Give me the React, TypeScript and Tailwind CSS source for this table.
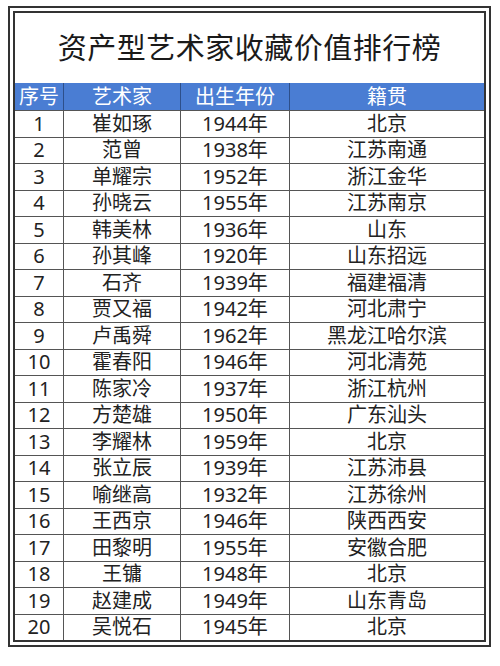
const rows: [string, string, string][] = [
  ["崔如琢", "1944年", "北京"],
  ["范曾", "1938年", "江苏南通"],
  ["单耀宗", "1952年", "浙江金华"],
  ["孙晓云", "1955年", "江苏南京"],
  ["韩美林", "1936年", "山东"],
  ["孙其峰", "1920年", "山东招远"],
  ["石齐", "1939年", "福建福清"],
  ["贾又福", "1942年", "河北肃宁"],
  ["卢禹舜", "1962年", "黑龙江哈尔滨"],
  ["霍春阳", "1946年", "河北清苑"],
  ["陈家冷", "1937年", "浙江杭州"],
  ["方楚雄", "1950年", "广东汕头"],
  ["李耀林", "1959年", "北京"],
  ["张立辰", "1939年", "江苏沛县"],
  ["喻继高", "1932年", "江苏徐州"],
  ["王西京", "1946年", "陕西西安"],
  ["田黎明", "1955年", "安徽合肥"],
  ["王镛", "1948年", "北京"],
  ["赵建成", "1949年", "山东青岛"],
  ["吴悦石", "1945年", "北京"],
];

const headers = ["序号", "艺术家", "出生年份", "籍贯"];

export default function App() {
  return (
    <div className="w-[500px] h-[666px] bg-white pt-[6px] pl-[8px] font-['Noto_Sans','Noto_Sans_CJK_SC',sans-serif]">
      <div className="w-[483px] border-2 border-[#333] p-[3px]">
        <div className="border-2 border-[#333]">
          <div className="h-[70px] flex items-center justify-center text-[29px] text-[#1a1a1a] tracking-[0.5px]">
            资产型艺术家收藏价值排行榜
          </div>
          <div className="grid grid-cols-[49px_117px_109px_1fr] h-[27px] bg-[#4a7dd3] text-white text-[20px] leading-none">
            {headers.map((h, i) => (
              <div
                key={h}
                className={
                  "flex items-center justify-center " + (i < 3 ? "border-r border-[#2d4f8a]" : "")
                }
              >
                {h}
              </div>
            ))}
          </div>
          {rows.map(([name, year, place], i) => (
            <div
              key={name + i}
              className="grid grid-cols-[49px_117px_109px_1fr] h-[26.5px] border-t border-[#555] text-[20px] leading-none text-[#222]"
            >
              <div className="flex items-center justify-center border-r border-[#555]">{i + 1}</div>
              <div className="flex items-center justify-center border-r border-[#555]">{name}</div>
              <div className="flex items-center justify-center border-r border-[#555]">{year}</div>
              <div className="flex items-center justify-center">{place}</div>
            </div>
          ))}
        </div>
      </div>
    </div>
  );
}
